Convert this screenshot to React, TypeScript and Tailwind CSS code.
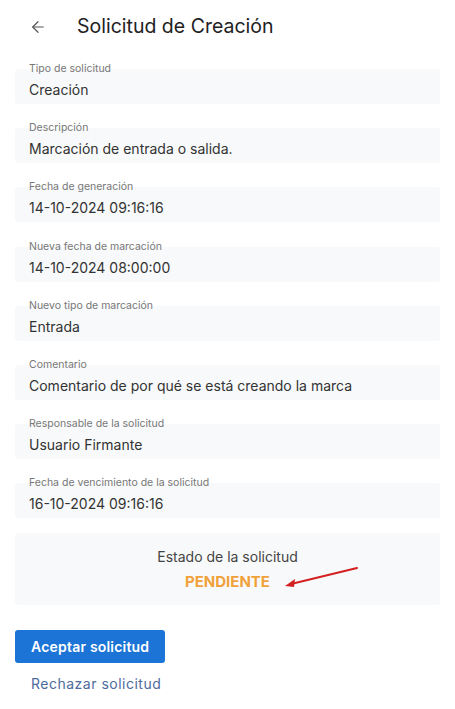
import { ArrowLeft } from "lucide-react";

const fields = [
  { label: "Tipo de solicitud", value: "Creación" },
  { label: "Descripción", value: "Marcación de entrada o salida." },
  { label: "Fecha de generación", value: "14-10-2024 09:16:16" },
  { label: "Nueva fecha de marcación", value: "14-10-2024 08:00:00" },
  { label: "Nuevo tipo de marcación", value: "Entrada" },
  { label: "Comentario", value: "Comentario de por qué se está creando la marca" },
  { label: "Responsable de la solicitud", value: "Usuario Firmante" },
  { label: "Fecha de vencimiento de la solicitud", value: "16-10-2024 09:16:16" },
];

function Field({ label, value }: { label: string; value: string }) {
  return (
    <div className="flex flex-col">
      <span className="relative z-10 px-[14px] text-[10.5px] leading-[12px] text-[#777]">{label}</span>
      <div className="-mt-[6px] flex h-[35px] items-center rounded-[3px] bg-[#f8f9fa] px-[14px] pt-[6px] text-[14px] text-[#333]">
        {value}
      </div>
    </div>
  );
}

export default function App() {
  return (
    <div className="min-h-screen bg-white px-[15px] font-['Inter',sans-serif]">
      <header className="flex h-[52px] items-center pt-[1px]">
        <ArrowLeft className="ml-[14px] h-[18px] w-[18px] text-[#555]" strokeWidth={1.6} />
        <h1 className="ml-[30px] text-[19.5px] font-normal text-[#222]">Solicitud de Creación</h1>
      </header>

      <main className="mt-[11px] flex flex-col gap-[18.2px]">
        {fields.map((f) => (
          <Field key={f.label} label={f.label} value={f.value} />
        ))}
      </main>

      <section className="relative mt-[15px] flex h-[72px] flex-col items-center rounded-[3px] bg-[#f8f9fa] pt-[15px]">
        <span className="text-[14px] leading-[18px] text-[#444]">Estado de la solicitud</span>
        <span className="mt-[7px] text-[15px] font-bold leading-[18px] text-[#f0a13a]">PENDIENTE</span>
        <svg className="absolute left-[268px] top-[33px]" width="76" height="24" viewBox="0 0 76 24">
          <line x1="74" y1="2" x2="8" y2="18" stroke="#d32020" strokeWidth="2" strokeLinecap="round" />
          <path d="M2 20 L12 13 L11 21 Z" fill="#d32020" />
        </svg>
      </section>

      <div className="mt-[25px] flex flex-col items-start">
        <button className="h-[33px] rounded-[3px] bg-[#1b74d6] px-[16px] text-[14px] font-semibold tracking-[0.2px] text-white">
          Aceptar solicitud
        </button>
        <button className="mt-[10px] px-[16px] text-[14px] tracking-[0.5px] text-[#4d6b9c]">Rechazar solicitud</button>
      </div>
    </div>
  );
}
